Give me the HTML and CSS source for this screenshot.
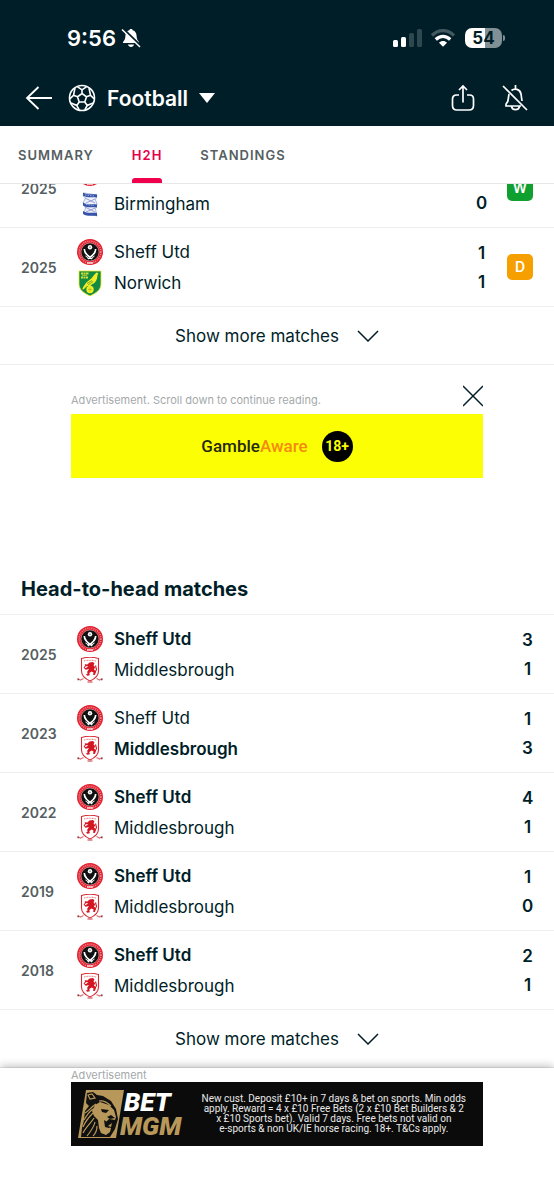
FILE: index.html
```html
<!DOCTYPE html>
<html lang="en">

<head>
    <meta charset="UTF-8">
    <meta name="viewport" content="width=device-width, initial-scale=1.0">
    <title>Football - H2H</title>
    <link rel="stylesheet" href="styles.css">
</head>

<body>
    <!-- Shared icons and crests -->
    <svg class="sprite" aria-hidden="true">
        <symbol id="sheff" viewBox="0 0 26 26">
            <circle cx="13" cy="13" r="13" fill="#e3202f" />
            <circle cx="13" cy="13" r="10.9" fill="none" stroke="#f29a9e" stroke-width="1.400" stroke-dasharray="1 1.1" />
            <circle cx="13" cy="13" r="9" fill="#111" stroke="#fff" stroke-width=".4" />
            <circle cx="13" cy="8.300" r="2.200" fill="#fff" />
            <circle cx="13" cy="8.300" r=".8" fill="#777" />
            <path d="M7.300 10c0 4 2.500 6.500 8 9.800M18.700 10c0 4-2.500 6.500-8 9.800" fill="none" stroke="#fff" stroke-width="1.700" />
            <path d="M8.500 17l3 2M17.500 17l-3 2" stroke="#fff" stroke-width="1" />
            <path d="M10 24h6" stroke="#fff" stroke-width="1.200" />
        </symbol>
        <symbol id="boro" viewBox="0 0 26 26">
            <path d="M4.500 1.500c5-1.500 12-1.500 17 0V14c0 5-4 8-8.500 10C8.500 22 4.500 19 4.500 14z" fill="#fff" stroke="#d92a35" stroke-width="1.100" />
            <path d="M7 4c4-1 8-1 12 0" fill="none" stroke="#e78388" stroke-width="1.200" stroke-dasharray="1 .6" />
            <path d="M12.500 5.500l3.500-.5 1.500 1.500-1 1.700 1.700 2-1.200 2.300 1.800 2-.8 3.500-2-.3.600-2.200-2-1-2.300 1.500.5 2.200-2.500.5-1.500-1.200 1.700-.6-.3-2.200 1.800-2.600-3.300.7-1.700-1.600 1.800-.2 2.600-1.600-2.800-.5-1-1.700 2.800.4z" fill="#d41522" />
            <path d="M9 8l-2 3M18.500 8.500l1 4-2 4" fill="none" stroke="#d41522" stroke-width="1.100" />
            <path d="M.5 21.500l3 1.500 3-1.500M19.500 21.500l3 1.500 3-1.500M10.500 25h5" fill="none" stroke="#d8757b" stroke-width="1.300" />
            <path d="M.5 22.500h1.500M24 22.500h1.500" stroke="#8d3a40" stroke-width="1.500" />
        </symbol>
        <symbol id="norwich" viewBox="0 0 26 26">
            <path d="M2 1h22v13c0 6-5 9-11 12C7 23 2 20 2 14z" fill="#148b42" stroke="#e8ea2e" stroke-width=".8" />
            <path d="M19.500 2.500l2 .8-.8 1.200-.7 4c-.8 3-2.600 4.800-5 5.800l-1.800 2-3.200-.2-3.500 3.500-1.200-.4c2-4.500 4.300-7.500 9-10.700l3.200-4z" fill="#f4ec25" />
            <path d="M10 13.500l5-3M11 15l5-3.500" stroke="#148b42" stroke-width=".6" />
            <circle cx="13" cy="19.500" r="3.700" fill="#f4ec25" />
            <path d="M11 19.500h4M13 17.500v4" stroke="#9aab25" stroke-width=".6" />
            <path d="M4 3.500h8M4 7.500h7" stroke="#d7df37" stroke-width="1.800" stroke-dasharray="2 .5" />
            <path d="M5 5.300h5" stroke="#d7df37" stroke-width=".8" />
        </symbol>
        <symbol id="birmingham" viewBox="0 0 26 26">
            <path d="M7 2l13 2-1.500 5L20 13l-1.500 5 1.500 7-13-3 1.500-5L6 12l2.500-5L6 5z" fill="#eef1fb" stroke="#8b99d2" stroke-width=".7" />
            <path d="M6 1.500c5 3 9 1 14 2v3c-5-1-9 1-14-2zM6 11.500c5 3 9 1 14 2v3c-5-1-9 1-14-2zM6 20c5 3 9 1 14 2v3c-5-1-9 1-14-2z" fill="#3553a8" />
            <path d="M8 7l10 5M18 8l-9 4M8 16l10 5M18 17l-9 4" stroke="#8b99d2" stroke-width=".9" />
            <path d="M8 4l9 1M9 13.500l8 1" stroke="#c6d0ef" stroke-width=".7" stroke-dasharray="1.500 1" />
        </symbol>
        <symbol id="chevron" viewBox="0 0 22 12">
            <path d="M1 1l10 10L21 1" fill="none" stroke="#001e28" stroke-width="1.500" />
        </symbol>
    </svg>

    <div class="page">
        <header class="header">
            <!-- Phone status bar -->
            <div class="status">
                <span class="time">9:56</span>
                <svg class="silent" width="20" height="20" viewBox="0 0 20 20">
                    <path d="M10 1c.8 0 1.500.5 1.700 1.300C14.500 3 15.500 5.500 15.600 8c.1 3 .9 4.500 2.400 6v1H2v-1c1.500-1.500 2.300-3 2.400-6 .1-2.500 1.100-5 3.900-5.700C8.500 1.500 9.200 1 10 1zM7 16.500h6c-.3 1.500-1.500 2.500-3 2.500s-2.700-1-3-2.500z" fill="#fff" />
                    <path d="M2 .5L20 18" stroke="#001e28" stroke-width="2" />
                    <path d="M1 1.500L19 19" stroke="#fff" stroke-width="1.500" />
                </svg>
                <svg class="signal" width="29" height="20" viewBox="0 0 29 20">
                    <rect x="0" y="12" width="5" height="7" rx="1.500" fill="#fff" />
                    <rect x="8" y="9" width="5" height="10" rx="1.500" fill="#fff" />
                    <rect x="16" y="5" width="5" height="14" rx="1.500" fill="#2f4850" />
                    <rect x="24" y="1" width="5" height="18" rx="1.500" fill="#2f4850" />
                </svg>
                <svg class="wifi" width="26" height="20" viewBox="0 0 26 20">
                    <path d="M2 7.500C8.500 1 17.500 1 24 7.500" fill="none" stroke="#42595f" stroke-width="3.200" />
                    <path d="M5.800 11.500c4.300-4.300 10.100-4.300 14.400 0" fill="none" stroke="#fff" stroke-width="3.200" />
                    <path d="M9 14.700c2.400-2.400 5.600-2.400 8 0l-4 4z" fill="#fff" />
                </svg>
                <div class="battery">54</div>
            </div>
            <div class="nav">
                <button class="icon-btn back" aria-label="Back">
                    <svg width="28" height="26" viewBox="0 0 28 26" fill="none" stroke="#fff" stroke-width="1.800">
                        <path d="M13.500 2L2 13l11.500 11M2 13h25" />
                    </svg>
                </button>
                <button class="sport">
                    <svg width="28" height="28" viewBox="0 0 28 28" fill="none" stroke="#fff" stroke-width="1.600">
                        <circle cx="14" cy="14" r="12.500" />
                        <path d="M14 9.500l4.500 3.300-1.700 5.200h-5.600l-1.700-5.200zM14 9.500V5.800M18.500 12.800l4-1.500M16.800 18l2.400 3.500M11.200 18l-2.400 3.500M9.500 12.800l-4-1.500M9.300 2.600L14 5.800l4.700-3.200M21 4l1.500 7.300 3.700 3.500M25 19l-5.800 2.500-2.400 4.300M11.200 25.800l-2.400-4.300L3 19M1.800 14.800l3.700-3.500L7 4" />
                    </svg>
                    <span>Football</span>
                    <svg width="16" height="10" viewBox="0 0 16 10">
                        <path d="M0 0h16L8 10z" fill="#fff" />
                    </svg>
                </button>
                <button class="icon-btn share" aria-label="Share">
                    <svg width="24" height="28" viewBox="0 0 24 28" fill="none" stroke="#fff" stroke-width="1.700">
                        <path d="M8 11H5.500C3 11 1.500 12.500 1.500 15v6.500C1.500 24.500 3 26 6 26h12c3 0 4.500-1.500 4.500-4.500V15c0-2.500-1.500-4-4-4H16M12 18.500V2M8 6l4-4 4 4" />
                    </svg>
                </button>
                <button class="icon-btn" aria-label="Notifications off">
                    <svg width="26" height="28" viewBox="0 0 26 28" fill="none" stroke="#fff" stroke-width="1.700">
                        <path d="M1 2l24 24M13.500 1v4M9.500 6.500c3-2.500 8.500-1.500 9.500 3.500l1 7M7 10l-1 6.500c-.3 2-2 3-2 4V22h15M9.500 22.500c.5 2 2 3.200 4 3.200s3.500-1.200 4-3.200" />
                    </svg>
                </button>
            </div>
        </header>

        <nav class="tabs">
            <a href="#summary" class="tab">SUMMARY</a>
            <a href="#h2h" class="tab active">H2H</a>
            <a href="#standings" class="tab">STANDINGS</a>
        </nav>

        <main class="content">
            <ul class="matches last-matches">
                <li class="match">
                    <span class="year">2025</span>
                    <div class="teams">
                        <div class="team winner"><svg class="crest"><use href="#sheff" /></svg>Sheff Utd</div>
                        <div class="team"><svg class="crest"><use href="#birmingham" /></svg>Birmingham</div>
                    </div>
                    <div class="scores"><span>3</span><span>0</span></div>
                    <span class="badge win">W</span>
                </li>
                <li class="match">
                    <span class="year">2025</span>
                    <div class="teams">
                        <div class="team"><svg class="crest"><use href="#sheff" /></svg>Sheff Utd</div>
                        <div class="team"><svg class="crest"><use href="#norwich" /></svg>Norwich</div>
                    </div>
                    <div class="scores"><span>1</span><span>1</span></div>
                    <span class="badge draw">D</span>
                </li>
            </ul>
            <button class="show-more">Show more matches <svg width="22" height="12"><use href="#chevron" /></svg></button>

            <aside class="ad">
                <div class="ad-head">
                    <span class="ad-label">Advertisement. Scroll down to continue reading.</span>
                    <button class="icon-btn" aria-label="Close advertisement">
                        <svg width="20" height="24" viewBox="0 0 20 24" stroke="#001e28" stroke-width="1.500">
                            <path d="M0 2l20 20M20 2L0 22" />
                        </svg>
                    </button>
                </div>
                <div class="gamble">
                    <span class="gamble-name">Gamble<span class="aware">Aware</span></span>
                    <span class="over18">18+</span>
                </div>
            </aside>

            <h2 class="title">Head-to-head matches</h2>
            <ul class="matches">
                <li class="match">
                    <span class="year">2025</span>
                    <div class="teams">
                        <div class="team winner"><svg class="crest"><use href="#sheff" /></svg>Sheff Utd</div>
                        <div class="team"><svg class="crest"><use href="#boro" /></svg>Middlesbrough</div>
                    </div>
                    <div class="scores"><span>3</span><span>1</span></div>
                </li>
                <li class="match">
                    <span class="year">2023</span>
                    <div class="teams">
                        <div class="team"><svg class="crest"><use href="#sheff" /></svg>Sheff Utd</div>
                        <div class="team winner"><svg class="crest"><use href="#boro" /></svg>Middlesbrough</div>
                    </div>
                    <div class="scores"><span>1</span><span>3</span></div>
                </li>
                <li class="match">
                    <span class="year">2022</span>
                    <div class="teams">
                        <div class="team winner"><svg class="crest"><use href="#sheff" /></svg>Sheff Utd</div>
                        <div class="team"><svg class="crest"><use href="#boro" /></svg>Middlesbrough</div>
                    </div>
                    <div class="scores"><span>4</span><span>1</span></div>
                </li>
                <li class="match">
                    <span class="year">2019</span>
                    <div class="teams">
                        <div class="team winner"><svg class="crest"><use href="#sheff" /></svg>Sheff Utd</div>
                        <div class="team"><svg class="crest"><use href="#boro" /></svg>Middlesbrough</div>
                    </div>
                    <div class="scores"><span>1</span><span>0</span></div>
                </li>
                <li class="match">
                    <span class="year">2018</span>
                    <div class="teams">
                        <div class="team winner"><svg class="crest"><use href="#sheff" /></svg>Sheff Utd</div>
                        <div class="team"><svg class="crest"><use href="#boro" /></svg>Middlesbrough</div>
                    </div>
                    <div class="scores"><span>2</span><span>1</span></div>
                </li>
            </ul>
            <button class="show-more">Show more matches <svg width="22" height="12"><use href="#chevron" /></svg></button>
        </main>

        <footer class="bottom-ad">
            <div class="ad-label">Advertisement</div>
            <a href="#betmgm" class="betmgm">
                <!-- Lion head -->
                <svg width="46" height="50" viewBox="0 0 46 50">
                    <path d="M8 1h38l-8 48H0z" fill="#b8985a" />
                    <path d="M9 4l6-1 4 3 6 1 8 5 5 8 2 10-3 10-5 8H3l1-9 2-8 1-9 4-5-3-3z" fill="#111" />
                    <path d="M22 13l9 3 5 5 2 7-1 3-6-1-3 3 1 4 4 2-1 4-4 3-5-2-2-5-1-8-4-4-2-5 3-6z" fill="#b8985a" />
                    <path d="M23 20l8 1-3 3-4-1zM33 26l4 3-5 1-3-2zM26 31l3 2 5-1 1 4-4 3-4-1z" fill="#111" />
                    <path d="M30 37l4-3-1 4z" fill="#b8985a" />
                    <path d="M10 6l4-1 3 4-5 1zM7 24c4-2 6-6 11-9M6 31c3-5 6-9 9-11M5 38c3-7 7-11 10-14M5 44c3-6 8-10 11-15M9 47c4-5 7-9 8-14M15 47c3-3 4-6 4-10M21 12c5-1 9 2 12 5" fill="none" stroke="#b8985a" stroke-width="1.200" />
                </svg>
                <span class="brand"><span class="bet">BET</span><span class="mgm">MGM</span></span>
                <span class="terms">New cust. Deposit £10+ in 7 days &amp; bet on sports. Min odds<br>apply. Reward = 4 x £10 Free Bets (2 x £10 Bet Builders &amp; 2<br>x £10 Sports bet). Valid 7 days. Free bets not valid on<br>e-sports &amp; non UK/IE horse racing. 18+. T&amp;Cs apply.</span>
            </a>
        </footer>
    </div>
</body>

</html>
```

FILE: styles.css
```css
* {
    box-sizing: border-box;
}

body {
    margin: 0;
    font-family: Inter, "Liberation Sans", sans-serif;
    font-size: 17px;
    color: #001e28;
    background-color: #fff;
}

button {
    padding: 0;
    border: none;
    background: none;
    color: inherit;
    font: inherit;
    cursor: pointer;
}

a {
    text-decoration: none;
}

svg {
    display: block;
    flex-shrink: 0;
}

.sprite {
    position: absolute;
    width: 0;
    height: 0;
}

.page {
    display: flex;
    flex-direction: column;
    min-height: 100vh;
}

/* Header */
.header {
    background-color: #001e28;
    color: #fff;
}

.status {
    display: flex;
    align-items: center;
    height: 70px;
    padding: 6px 52px 0 67px;
}

.time {
    font-size: 22px;
    font-weight: 600;
}

.silent {
    margin-left: 5px;
}

.signal {
    margin-left: auto;
}

.wifi {
    margin-left: 8px;
}

.battery {
    position: relative;
    width: 37px;
    height: 20px;
    margin-left: 9px;
    border-radius: 7px;
    background: linear-gradient(to right, #fff 54%, #809095 54%);
    color: #001e28;
    font-size: 17px;
    font-weight: 700;
    line-height: 20px;
    text-align: center;
}

.battery::after {
    content: "";
    position: absolute;
    top: 7px;
    right: -3px;
    width: 2px;
    height: 6px;
    border-radius: 0 2px 2px 0;
    background-color: #809095;
}

.nav {
    display: flex;
    align-items: center;
    height: 56px;
    padding: 0 26px 0 25px;
}

.sport {
    display: flex;
    align-items: center;
    gap: 11px;
    margin: 0 auto 0 15px;
    font-size: 21px;
    font-weight: 600;
}

.share {
    margin-right: 27px;
}

/* Tabs */
.tabs {
    display: flex;
    gap: 38px;
    height: 58px;
    padding: 0 18px;
    border-bottom: 1px solid #e8e8e8;
}

.tab {
    display: flex;
    align-items: center;
    color: #555e61;
    font-size: 13px;
    font-weight: 600;
    letter-spacing: 1px;
}

.tab.active {
    position: relative;
    color: #e6004c;
}

.tab.active::after {
    content: "";
    position: absolute;
    left: 0;
    right: 0;
    bottom: 0;
    height: 5px;
    border-radius: 3px 3px 0 0;
    background-color: #f0004c;
}

/* Matches */
.content {
    flex: 1;
    overflow: hidden;
}

.matches {
    margin: 0;
    padding: 0;
    list-style: none;
}

/* list is scrolled partly under the tabs */
.last-matches {
    margin-top: -35px;
}

.match {
    display: flex;
    align-items: center;
    height: 79px;
    padding: 0 21px;
    border-bottom: 1px solid #eee;
}

.year {
    width: 56px;
    color: #555e61;
    font-size: 14px;
    font-weight: 600;
}

.teams {
    flex: 1;
}

.team {
    display: flex;
    align-items: center;
    gap: 11px;
    height: 31px;
}

.winner {
    font-weight: 600;
}

.crest {
    width: 26px;
    height: 26px;
}

.scores {
    display: flex;
    flex-direction: column;
    width: 11px;
    padding-top: 2px;
    font-weight: 600;
    line-height: 29px;
    text-align: center;
}

.badge {
    width: 26px;
    height: 26px;
    margin-left: 20px;
    border-radius: 5px;
    color: #fff;
    font-size: 14px;
    font-weight: 600;
    line-height: 26px;
    text-align: center;
}

.win {
    background-color: #10a030;
}

.draw {
    background-color: #f5a000;
}

.show-more {
    display: flex;
    align-items: center;
    justify-content: center;
    gap: 18px;
    width: 100%;
    height: 58px;
    border-bottom: 1px solid #eee;
}

.title {
    margin: 0;
    padding: 2px 21px 0;
    border-bottom: 1px solid #eee;
    font-size: 20px;
    font-weight: 700;
    line-height: 50px;
}

/* Adverts */
.ad {
    max-width: 412px;
    margin: 0 auto 84px;
    padding-top: 19px;
}

.ad-head {
    display: flex;
    justify-content: space-between;
    margin-bottom: 6px;
}

.ad-head .ad-label {
    align-self: flex-end;
    line-height: 16px;
}

.ad-label {
    color: #a5a9ab;
    font-size: 11px;
    line-height: 14px;
}

.gamble {
    display: flex;
    align-items: center;
    justify-content: center;
    gap: 14px;
    height: 64px;
    background-color: #fcff04;
    font-family: Roboto, sans-serif;
}

.gamble-name {
    color: #26290a;
    font-size: 17px;
    font-weight: 500;
}

.aware {
    color: #f58a10;
}

.over18 {
    width: 31px;
    height: 31px;
    border-radius: 50%;
    background-color: #000;
    color: #fcff04;
    font-size: 14px;
    font-weight: 700;
    line-height: 31px;
    text-align: center;
}

.bottom-ad {
    position: relative;
    padding-bottom: 54px;
    background-color: #fff;
    box-shadow: 0 -1px 9px rgba(0, 0, 0, 0.3);
}

.bottom-ad .ad-label,
.betmgm {
    max-width: 412px;
    margin: 0 auto;
}

.betmgm {
    display: flex;
    align-items: center;
    height: 64px;
    padding: 0 17px 0 7px;
    background-color: #0b0b0b;
    color: #e8e8e8;
}

.brand {
    display: flex;
    flex-direction: column;
    margin-left: -4px;
    font-family: Roboto, sans-serif;
    font-size: 26px;
    font-style: italic;
    font-weight: 900;
    line-height: 24px;
}

.bet {
    padding-left: 4px;
    color: #fff;
}

.mgm {
    color: #b8985a;
}

.terms {
    margin-left: auto;
    font-family: Roboto, sans-serif;
    font-size: 10px;
    line-height: 10px;
    text-align: center;
    white-space: nowrap;
}
```
